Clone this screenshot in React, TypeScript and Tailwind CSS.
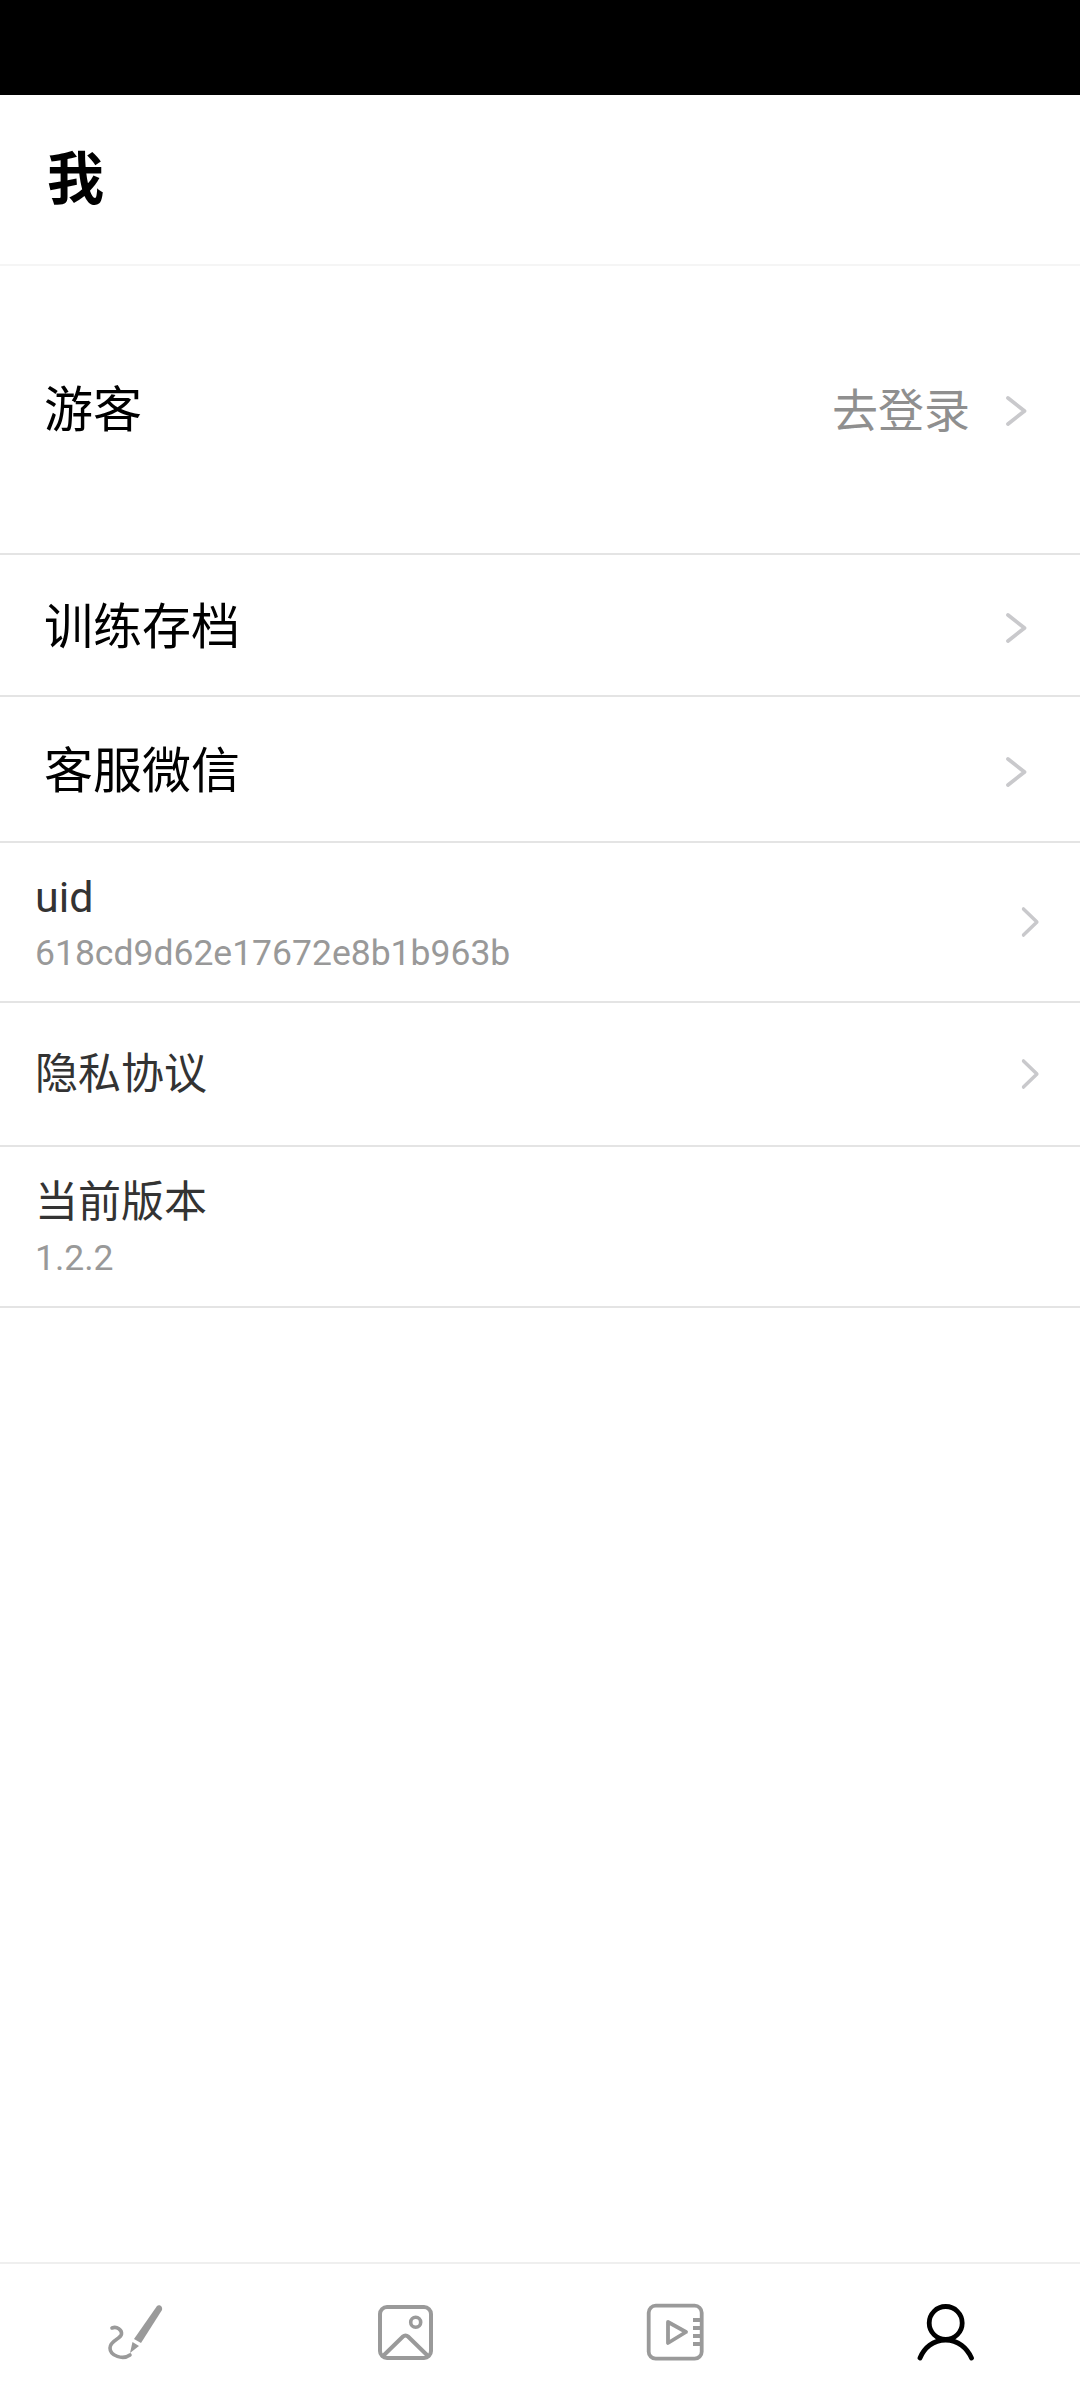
const cjk = "font-['Roboto','Noto_Sans_CJK_SC',sans-serif]";

function Chevron({ className }: { className: string }) {
  return (
    <svg viewBox="0 0 22 32" fill="none" preserveAspectRatio="none" className={className}>
      <path d="M3 3 L19.5 16 L3 29" stroke="#c9c9cc" strokeWidth="3.8" strokeLinecap="round" strokeLinejoin="round" />
    </svg>
  );
}

function BigRow({ title, height }: { title: string; height: string }) {
  return (
    <div className={`flex items-center justify-between border-b-2 border-[#e4e4e4] pt-[5px] pl-[44px] pr-[53px] ${height}`}>
      <span className="text-[49px] leading-[60px] text-black">{title}</span>
      <Chevron className="w-[22px] h-[32px]" />
    </div>
  );
}

function SmallRow({ title, sub, arrow, height }: { title: string; sub?: string; arrow?: boolean; height: string }) {
  return (
    <div className={`flex items-center justify-between border-b-2 border-[#e4e4e4] pl-[35px] pr-[41px] ${height}`}>
      <div className={sub ? "flex flex-col gap-[9px] pt-[3px]" : "flex flex-col"}>
        <span className="text-[43px] leading-[50px] text-[#333333]">{title}</span>
        {sub && <span className="text-[35.5px] leading-[44px] text-[#999999]">{sub}</span>}
      </div>
      {arrow && <Chevron className="w-[18px] h-[32px]" />}
    </div>
  );
}

function PenIcon() {
  return (
    <svg viewBox="0 0 60 60" fill="none" className="w-[60px] h-[60px]">
      <path d="M7 26 C12 24 17 28 16.5 32 C16 37 5 38 5 46 C5 54 18 58 25 53" stroke="#9a9a9a" strokeWidth="3.6" strokeLinecap="round" />
      <path d="M52 4 C54 2 58 4 57 8 L36 41 L29 37 Z" fill="#9a9a9a" />
      <path d="M27.5 40 L34 44 L25 51 Z" fill="#9a9a9a" />
    </svg>
  );
}

function ImageIcon() {
  return (
    <svg viewBox="0 0 60 60" fill="none" stroke="#9a9a9a" strokeWidth="4" className="w-[60px] h-[60px]">
      <rect x="5" y="5" width="51" height="51" rx="7" />
      <circle cx="40.7" cy="20.3" r="5" strokeWidth="3.6" />
      <path d="M8 54 L28 34.5 C29.5 33 31.5 33 33 34.5 L53 54" strokeLinecap="round" />
    </svg>
  );
}

function PlayIcon() {
  return (
    <svg viewBox="0 0 60 60" fill="none" stroke="#9a9a9a" strokeWidth="3.8" className="w-[60px] h-[60px]">
      <rect x="3.7" y="3.7" width="53" height="53" rx="7" />
      <path d="M23 20 L41 30 L23 41 Z" strokeLinejoin="round" />
      <path d="M48 18 H56 M48 26 H56 M48 34 H56 M48 42 H56" />
    </svg>
  );
}

function UserIcon() {
  return (
    <svg viewBox="0 0 60 60" fill="none" stroke="#000000" strokeWidth="4.8" strokeLinecap="round" className="w-[60px] h-[60px]">
      <circle cx="30.7" cy="21" r="16.5" />
      <path d="M5 56 C9 46 18 38 30.7 38 C43 38 52 46 56.5 56" />
    </svg>
  );
}

export default function App() {
  return (
    <div className={`w-[1080px] h-[2400px] flex flex-col bg-white ${cjk}`}>
      <div className="h-[95px] bg-black" />
      <div className="h-[171px] flex items-center pl-[47px] border-b-2 border-[#f5f5f5]">
        <span className="text-[57px] leading-[70px] font-bold text-black">我</span>
      </div>
      <div className="h-[289px] flex items-center justify-between border-b-2 border-[#e4e4e4] pt-[3px] pl-[44px] pr-[53px]">
        <span className="text-[49px] leading-[60px] text-black">游客</span>
        <div className="flex items-center gap-[35px]">
          <span className="text-[46px] leading-[60px] text-[#8f8f8f]">去登录</span>
          <Chevron className="w-[22px] h-[32px]" />
        </div>
      </div>
      <BigRow title="训练存档" height="h-[142px]" />
      <BigRow title="客服微信" height="h-[146px]" />
      <SmallRow title="uid" sub="618cd9d62e17672e8b1b963b" arrow height="h-[160px]" />
      <SmallRow title="隐私协议" arrow height="h-[144px]" />
      <SmallRow title="当前版本" sub="1.2.2" height="h-[161px]" />
      <div className="flex-1" />
      <div className="h-[138px] border-t-2 border-[#efefef] grid grid-cols-4 items-center justify-items-center">
        <PenIcon />
        <ImageIcon />
        <PlayIcon />
        <UserIcon />
      </div>
    </div>
  );
}
